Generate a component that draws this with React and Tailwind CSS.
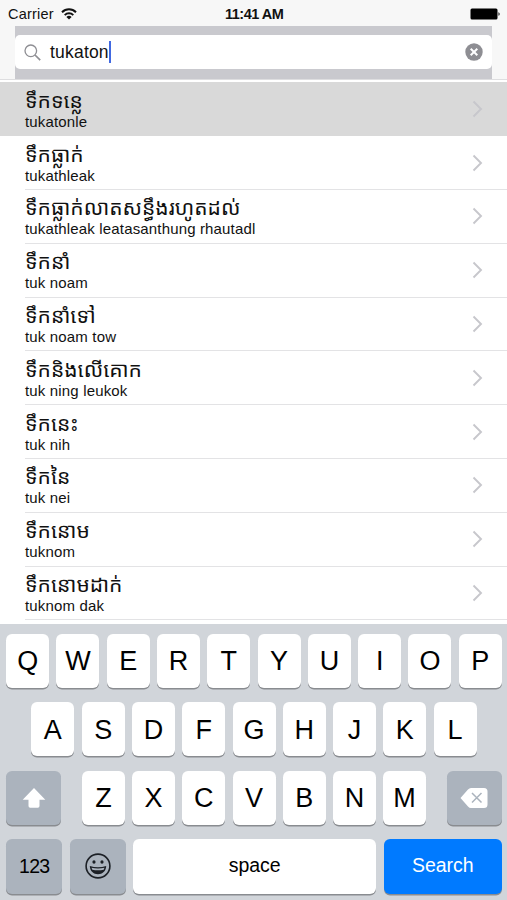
import { useState } from 'react';

const words = [
    { khmer: 'ទឹកទន្លេ', roman: 'tukatonle' },
    { khmer: 'ទឹកធ្លាក់', roman: 'tukathleak' },
    { khmer: 'ទឹកធ្លាក់លាតសន្ធឹងរហូតដល់', roman: 'tukathleak leatasanthung rhautadl' },
    { khmer: 'ទឹកនាំ', roman: 'tuk noam' },
    { khmer: 'ទឹកនាំទៅ', roman: 'tuk noam tow' },
    { khmer: 'ទឹកនិងលើគោក', roman: 'tuk ning leukok' },
    { khmer: 'ទឹកនេះ', roman: 'tuk nih' },
    { khmer: 'ទឹកនៃ', roman: 'tuk nei' },
    { khmer: 'ទឹកនោម', roman: 'tuknom' },
    { khmer: 'ទឹកនោមដាក់', roman: 'tuknom dak' },
];

const StatusBar = () => (
    <div className="relative flex h-[26px] items-center justify-between pl-2 pr-[6px] pt-[2px]">
        <div className="flex items-center gap-[7px]">
            <span className="text-[14.5px] leading-none tracking-[0.2px]">Carrier</span>
            <svg width="16" height="12" viewBox="0 0 16 12" fill="none" stroke="#111" strokeWidth="2">
                <path d="M1 4.2a10 10 0 0 1 14 0" />
                <path d="M3.7 7.1a6.2 6.2 0 0 1 8.6 0" />
                <path d="M8 11.6 5.4 9a3.7 3.7 0 0 1 5.2 0z" fill="#111" stroke="none" />
            </svg>
        </div>
        <span className="absolute left-[225px] top-[7px] text-[14.5px] font-bold leading-none tracking-[-0.5px]">11:41 AM</span>
        <svg width="31" height="12" viewBox="0 0 31 12">
            <rect x="0.5" y="0.5" width="27" height="11" rx="1.5" fill="#000" />
            <path d="M28.5 4.2c1.4.3 1.4 3.3 0 3.6z" fill="#000" />
        </svg>
    </div>
);

const SearchBar = ({ value, onClear }) => (
    <div className="mx-[15px] flex h-[53px] items-center bg-[#c9c9ce] pb-px">
        <div className="flex h-[34px] w-full items-center rounded-[5px] bg-white px-[9px]">
            <svg width="17" height="17" viewBox="0 0 17 17" fill="none" stroke="#8e8e93" strokeWidth="1.3">
                <circle cx="6.8" cy="6.8" r="5.8" />
                <path d="m11 11 5.2 5.2" strokeWidth="1.7" />
            </svg>
            <span className="ml-[9px] pt-px text-[17.5px] leading-none tracking-[0.2px]">{value}</span>
            <span className="h-[22px] w-[2px] bg-[#4169e1]" />
            <button className="ml-auto" onClick={onClear}>
                <svg width="18" height="18" viewBox="0 0 18 18">
                    <circle cx="9" cy="9" r="8.7" fill="#8e8e93" />
                    <path d="m5.7 5.7 6.6 6.6m0-6.6-6.6 6.6" stroke="#fff" strokeWidth="2" />
                </svg>
            </button>
        </div>
    </div>
);

const WordRow = ({ word, selected, onSelect }) => (
    <li
        className={selected ? 'flex h-[53.8px] bg-[#d9d9d9] pl-[25px]' : 'flex h-[53.8px] pl-[25px]'}
        onClick={onSelect}
    >
        <div className={selected ? 'flex flex-1 items-center' : 'flex flex-1 items-center border-b border-[#e3e3e5]'}>
            <div className="flex-1 pb-[2px]">
                <div className="h-[28px] whitespace-nowrap pt-[3px] text-[21px] leading-[28px]">{word.khmer}</div>
                <div className="h-[20px] text-[15px] leading-[20px] tracking-[0.16px]">{word.roman}</div>
            </div>
            <svg className="mr-[24px]" width="11" height="18" viewBox="0 0 11 18" fill="none" stroke="#c7c7cc" strokeWidth="1.9">
                <path d="m1.5 1.5 7.5 7.5-7.5 7.5" />
            </svg>
        </div>
    </li>
);

const Key = ({ label }) => (
    <button className="flex h-[54px] w-[43px] items-center justify-center rounded-[6px] bg-white pt-[1.5px] text-[27px] leading-none shadow-[0_1.5px_0_#898c90]">
        {label}
    </button>
);

const Keyboard = ({ onType, onDelete }) => (
    <div className="flex h-[276px] flex-col gap-[14.4px] bg-[#d1d5da] pl-[6.2px] pr-[5.2px] pt-[10px] text-black">
        <div className="flex justify-between">
            {'QWERTYUIOP'.split('').map(k => <Key key={k} label={k} />)}
        </div>
        <div className="flex justify-between px-[25.2px]">
            {'ASDFGHJKL'.split('').map(k => <Key key={k} label={k} />)}
        </div>
        <div className="flex justify-between">
            <button className="flex h-[54px] w-[55px] items-center justify-center rounded-[6px] bg-[#abb3bd] shadow-[0_1.5px_0_#898c90]">
                <svg width="24" height="20" viewBox="0 0 24 20" fill="#fff">
                    <path d="M12 0 23.3 11.7H17.5V18q0 1.7-1.7 1.7H8.2Q6.5 19.7 6.5 18v-6.3H.7z" />
                </svg>
            </button>
            <div className="flex gap-[7.2px]">
                {'ZXCVBNM'.split('').map(k => <Key key={k} label={k} />)}
            </div>
            <button className="flex h-[54px] w-[55px] items-center justify-center rounded-[6px] bg-[#abb3bd] shadow-[0_1.5px_0_#898c90]" onClick={onDelete}>
                <svg width="28" height="20" viewBox="0 0 28 20">
                    <path d="M.5 10 8 1.5Q9.3 0 11 0h13q3.5 0 3.5 3.5v13q0 3.5-3.5 3.5H11q-1.7 0-3-1.5z" fill="#fff" />
                    <path d="m12 5 9.5 9.5m0-9.5L12 14.5" stroke="#abb3bd" strokeWidth="1.5" />
                </svg>
            </button>
        </div>
        <div className="flex gap-[7.4px]">
            <button className="h-[54.5px] w-[56px] rounded-[6px] bg-[#abb3bd] text-[19.5px] leading-none tracking-[-0.8px] shadow-[0_1.5px_0_#898c90]">123</button>
            <button className="flex h-[54.5px] w-[56px] items-center justify-center rounded-[6px] bg-[#abb3bd] shadow-[0_1.5px_0_#898c90]">
                <svg width="26" height="26" viewBox="0 0 26 26" fill="#1c2026">
                    <circle cx="13" cy="13" r="11.9" fill="none" stroke="#1c2026" strokeWidth="1.6" />
                    <ellipse cx="9" cy="9" rx="1.6" ry="1.8" />
                    <ellipse cx="17" cy="9" rx="1.6" ry="1.8" />
                    <path d="M4.8 13q8.2 2.4 16.4 0c-.2 5.2-3.8 8.2-8.2 8.2s-8-3-8.2-8.2z" />
                    <path d="M6.5 14.8q6.5 1.4 13 0l-.8 1.9q-5.7 1.3-11.4 0z" fill="#abb3bd" />
                </svg>
            </button>
            <button className="h-[54.5px] flex-1 rounded-[6px] bg-white pb-[2px] text-[19.5px] leading-none shadow-[0_1.5px_0_#898c90]" onClick={() => onType(' ')}>
                space
            </button>
            <button className="h-[54.5px] w-[118px] rounded-[6px] bg-[#007aff] pb-[2px] text-[19.5px] leading-none text-white shadow-[0_1.5px_0_#898c90]">
                Search
            </button>
        </div>
    </div>
);

export default function App() {
    const [query, setQuery] = useState('tukaton');
    const [selected, setSelected] = useState(0);

    return (
        <div className="flex h-[900px] w-[507px] flex-col overflow-hidden bg-white font-['Liberation_Sans','Noto_Sans_Khmer','Khmer_OS',sans-serif] text-[#111]">
            <header className="h-[80px] border-b border-[#dedee0] bg-[#f7f7f7]">
                <StatusBar />
                <SearchBar value={query} onClear={() => setQuery('')} />
            </header>
            <ul className="h-[544px] overflow-hidden pt-[2.4px]">
                {words.map((word, i) => (
                    <WordRow key={word.roman} word={word} selected={i === selected} onSelect={() => setSelected(i)} />
                ))}
            </ul>
            <Keyboard onType={ch => setQuery(query + ch)} onDelete={() => setQuery(query.slice(0, -1))} />
        </div>
    );
}
